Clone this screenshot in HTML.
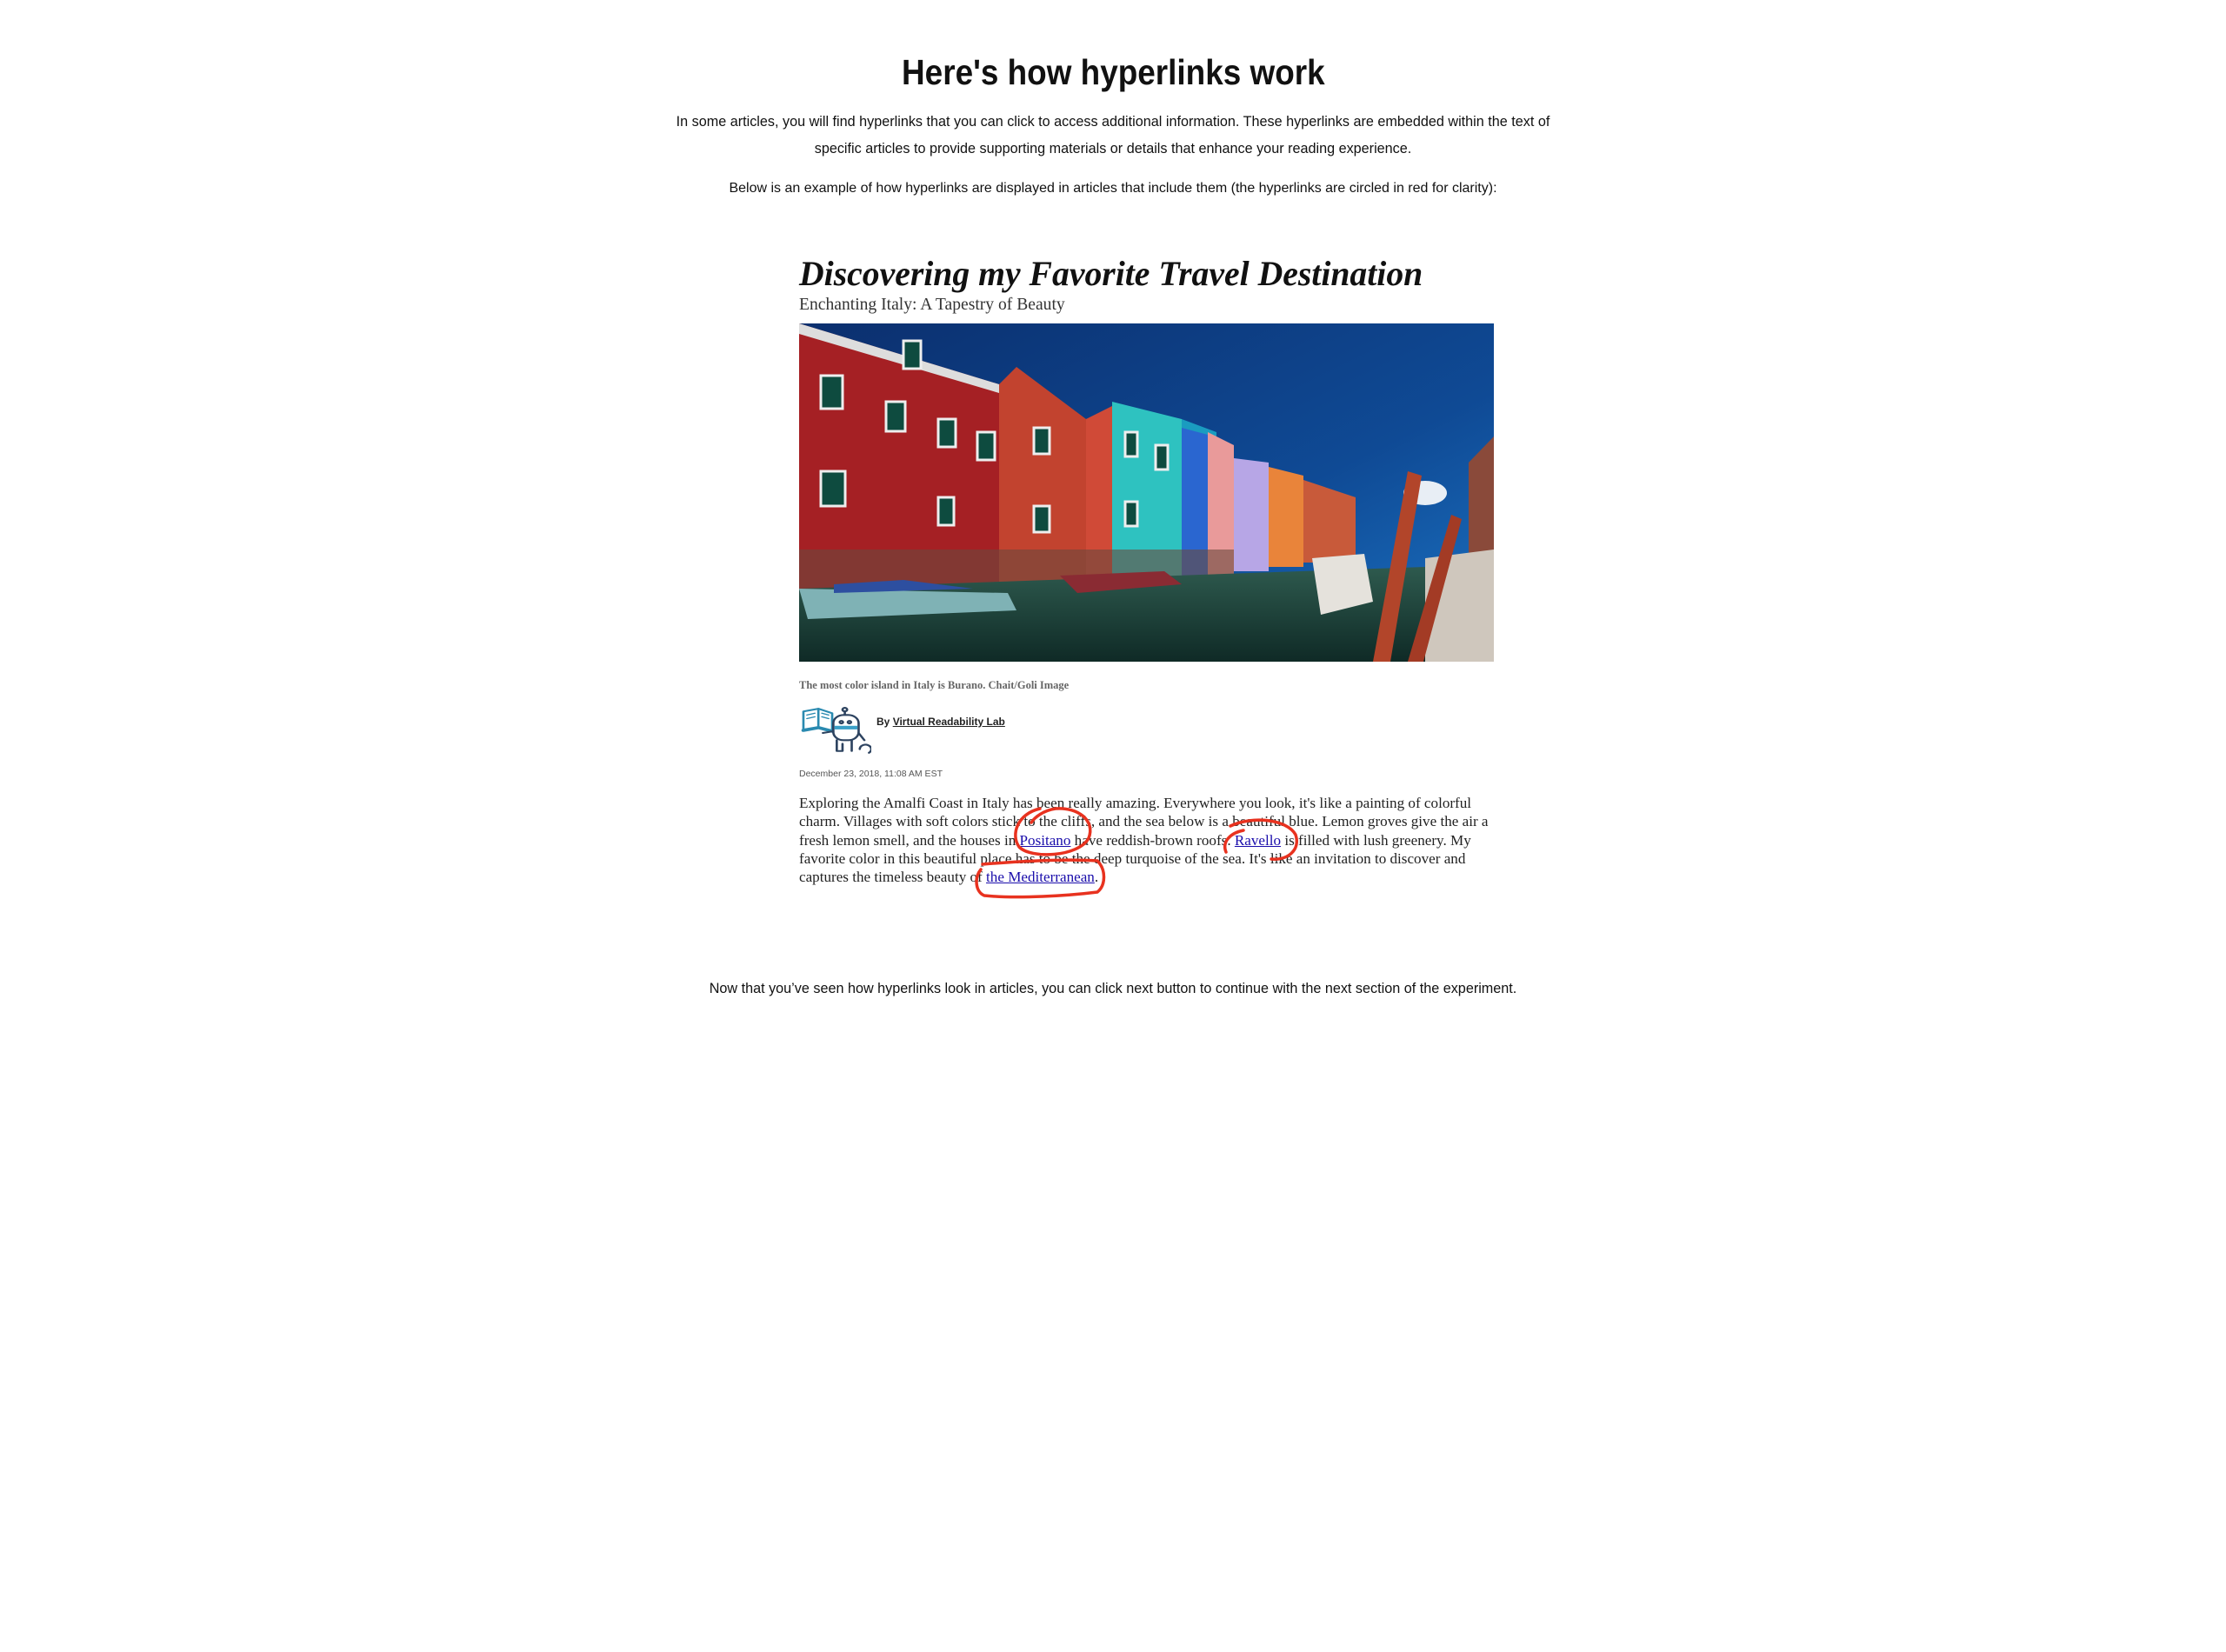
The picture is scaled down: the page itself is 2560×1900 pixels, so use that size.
<!DOCTYPE html>
<html><head><meta charset="utf-8"><style>
html,body{margin:0;padding:0;background:#fff;width:2560px;height:1900px;overflow:hidden;position:relative;font-family:"Liberation Sans",Arial,sans-serif;color:#111}
.a{position:absolute;white-space:nowrap}
.c{left:0;width:2560px;text-align:center}
.serif{font-family:"Liberation Serif","Times New Roman",serif}
a{color:#1a0dab}
</style></head><body>
<div class="a c" style="top:60px;font-size:41px;font-weight:bold;color:#111"><span style="display:inline-block;transform:scaleX(0.9)">Here's how hyperlinks work</span></div>
<div class="a c" style="top:125px;font-size:16.2px;line-height:31px;color:#111">In some articles, you will find hyperlinks that you can click to access additional information. These hyperlinks are embedded within the text of<br>specific articles to provide supporting materials or details that enhance your reading experience.</div>
<div class="a c" style="top:208px;font-size:16px;color:#111">Below is an example of how hyperlinks are displayed in articles that include them (the hyperlinks are circled in red for clarity):</div>

<div class="a serif" style="left:919px;top:292px;font-size:39.7px;font-weight:bold;font-style:italic;color:#111">Discovering my Favorite Travel Destination</div>
<div class="a serif" style="left:919px;top:340px;font-size:19.6px;color:#333">Enchanting Italy: A Tapestry of Beauty</div>

<svg class="a" style="left:919px;top:372px" width="799" height="389" viewBox="0 0 799 389">
<defs>
<linearGradient id="sky" x1="0" y1="0" x2="1" y2="1"><stop offset="0" stop-color="#0b2f6e"/><stop offset="0.6" stop-color="#0f4a95"/><stop offset="1" stop-color="#1c74c4"/></linearGradient>
<linearGradient id="wat" x1="0" y1="0" x2="0" y2="1"><stop offset="0" stop-color="#2e5a4e"/><stop offset="1" stop-color="#0f2a26"/></linearGradient>
</defs>
<rect width="799" height="389" fill="url(#sky)"/>
<ellipse cx="720" cy="195" rx="25" ry="14" fill="#e8eef5"/>
<polygon points="0,0 230,70 250,60 330,120 360,110 420,150 440,145 500,175 500,330 0,330" fill="#b8332e"/>
<polygon points="0,10 230,80 230,330 0,330" fill="#a52024"/>
<polygon points="0,0 230,70 230,80 0,12" fill="#ddd"/>
<polygon points="230,70 250,50 330,110 330,330 230,330" fill="#c2432f"/>
<polygon points="330,110 360,95 420,140 420,330 330,330" fill="#d04a37"/>
<polygon points="360,90 440,110 440,300 360,300" fill="#2ec2c0"/>
<polygon points="440,110 480,125 480,300 440,300" fill="#1a9cc0"/>
<polygon points="440,120 470,128 470,300 440,300" fill="#2a66d0"/>
<polygon points="470,125 500,140 500,290 470,290" fill="#e99a9a"/>
<polygon points="500,155 540,160 540,285 500,285" fill="#b7a6e6"/>
<polygon points="540,165 580,175 580,280 540,280" fill="#e9843a"/>
<polygon points="580,180 640,200 640,275 580,275" fill="#c85a3a"/>
<polygon points="770,160 799,130 799,280 770,280" fill="#8a4a3a"/>
<g fill="#0e4b3f" stroke="#eee" stroke-width="3">
<rect x="25" y="60" width="25" height="38"/><rect x="100" y="90" width="22" height="34"/><rect x="160" y="110" width="20" height="32"/><rect x="205" y="125" width="20" height="32"/>
<rect x="120" y="20" width="20" height="32"/><rect x="270" y="120" width="18" height="30"/><rect x="375" y="125" width="14" height="28"/><rect x="410" y="140" width="14" height="28"/>
<rect x="25" y="170" width="28" height="40"/><rect x="160" y="200" width="18" height="32"/><rect x="270" y="210" width="18" height="30"/><rect x="375" y="205" width="14" height="28"/>
</g>
<rect x="0" y="260" width="500" height="75" fill="#6b4a3e" opacity="0.6"/>
<polygon points="720,270 799,260 799,389 720,389" fill="#cfc7bd"/>
<polygon points="0,305 720,280 720,389 0,389" fill="url(#wat)"/>
<polygon points="0,305 240,310 250,330 10,340" fill="#7fb2b5"/>
<polygon points="40,300 120,295 200,305 40,310" fill="#2d4fa0"/>
<polygon points="300,290 420,285 440,300 320,310" fill="#8a2b33"/>
<polygon points="590,270 650,265 660,320 600,335" fill="#e5e2dc"/>
<polygon points="660,389 700,170 716,175 680,389" fill="#b2452a"/>
<polygon points="700,389 750,220 762,225 718,389" fill="#a33b25"/>
</svg>

<div class="a serif" style="left:919px;top:781px;font-size:12.5px;font-weight:bold;color:#666">The most color island in Italy is Burano. Chait/Goli Image</div>

<svg class="a" style="left:920px;top:812px" width="82" height="60" viewBox="0 0 62 58" preserveAspectRatio="none" fill="none" stroke-width="2" stroke-linecap="round" stroke-linejoin="round">
<path d="M3 6 L16 3 L28 8 L28 28 L16 24 L3 27 Z" fill="#fff" stroke="#2a8ab0"/>
<path d="M16 3 L16 24" stroke="#2a8ab0"/>
<path d="M3 27 L16 24 L28 28" stroke="#2a8ab0" stroke-width="3.5"/>
<path d="M6 10 L13 8 M6 14 L13 12 M19 8 L25 10 M19 12 L25 14" stroke="#2a8ab0" stroke-width="1.3"/>
<circle cx="39" cy="4" r="2" stroke="#2d4360"/>
<path d="M39 6 L39 10" stroke="#2d4360"/>
<rect x="29" y="10" width="22" height="28" rx="9" fill="#fff" stroke="#2d4360"/>
<rect x="30" y="22" width="20" height="4" fill="#3aa0c8" stroke="none"/>
<circle cx="36" cy="18" r="1.4" stroke="#2d4360"/><circle cx="43" cy="18" r="1.4" stroke="#2d4360"/>
<path d="M32 38 L32 50 L37 50 L37 42 M45 38 L45 50" stroke="#2d4360"/>
<path d="M51 30 L56 38 M20 30 L29 28" stroke="#2d4360"/>
<path d="M52 48 a5 5 0 1 1 8 4" stroke="#2d4360"/>
</svg>
<div class="a" style="left:1008px;top:823px;font-size:12px;font-weight:bold;color:#222">By <span style="text-decoration:underline">Virtual Readability Lab</span></div>
<div class="a" style="left:919px;top:884px;font-size:10.5px;color:#555">December 23, 2018, 11:08 AM EST</div>

<div class="a serif" style="left:919px;top:913px;font-size:17.1px;line-height:21.3px;color:#222">Exploring the Amalfi Coast in Italy has been really amazing. Everywhere you look, it's like a painting of colorful<br>charm. Villages with soft colors stick to the cliffs, and the sea below is a beautiful blue. Lemon groves give the air a<br>fresh lemon smell, and the houses in <a href="#">Positano</a> have reddish-brown roofs. <a href="#">Ravello</a> is filled with lush greenery. My<br>favorite color in this beautiful place has to be the deep turquoise of the sea. It's like an invitation to discover and<br>captures the timeless beauty of <a href="#">the Mediterranean</a>.</div>

<svg class="a" style="left:0;top:0" width="2560" height="1100" fill="none" stroke="#e8321f" stroke-width="3.5" stroke-linecap="round">
<path d="M1196 930 C1170 936 1162 960 1172 974 C1185 988 1240 986 1252 964 C1260 944 1240 928 1214 930 C1200 932 1190 940 1186 946"/>
<path d="M1430 955 C1415 958 1405 968 1410 980 M1415 950 C1440 938 1480 942 1490 960 C1496 978 1480 990 1462 988"/>
<path d="M1128 1000 C1120 1010 1122 1026 1132 1030 C1170 1034 1230 1030 1262 1026 C1272 1018 1272 1000 1262 990 C1230 988 1180 990 1130 994"/>
</svg>

<div class="a c" style="top:1128px;font-size:16.2px;color:#111">Now that you’ve seen how hyperlinks look in articles, you can click next button to continue with the next section of the experiment.</div>
</body></html>
